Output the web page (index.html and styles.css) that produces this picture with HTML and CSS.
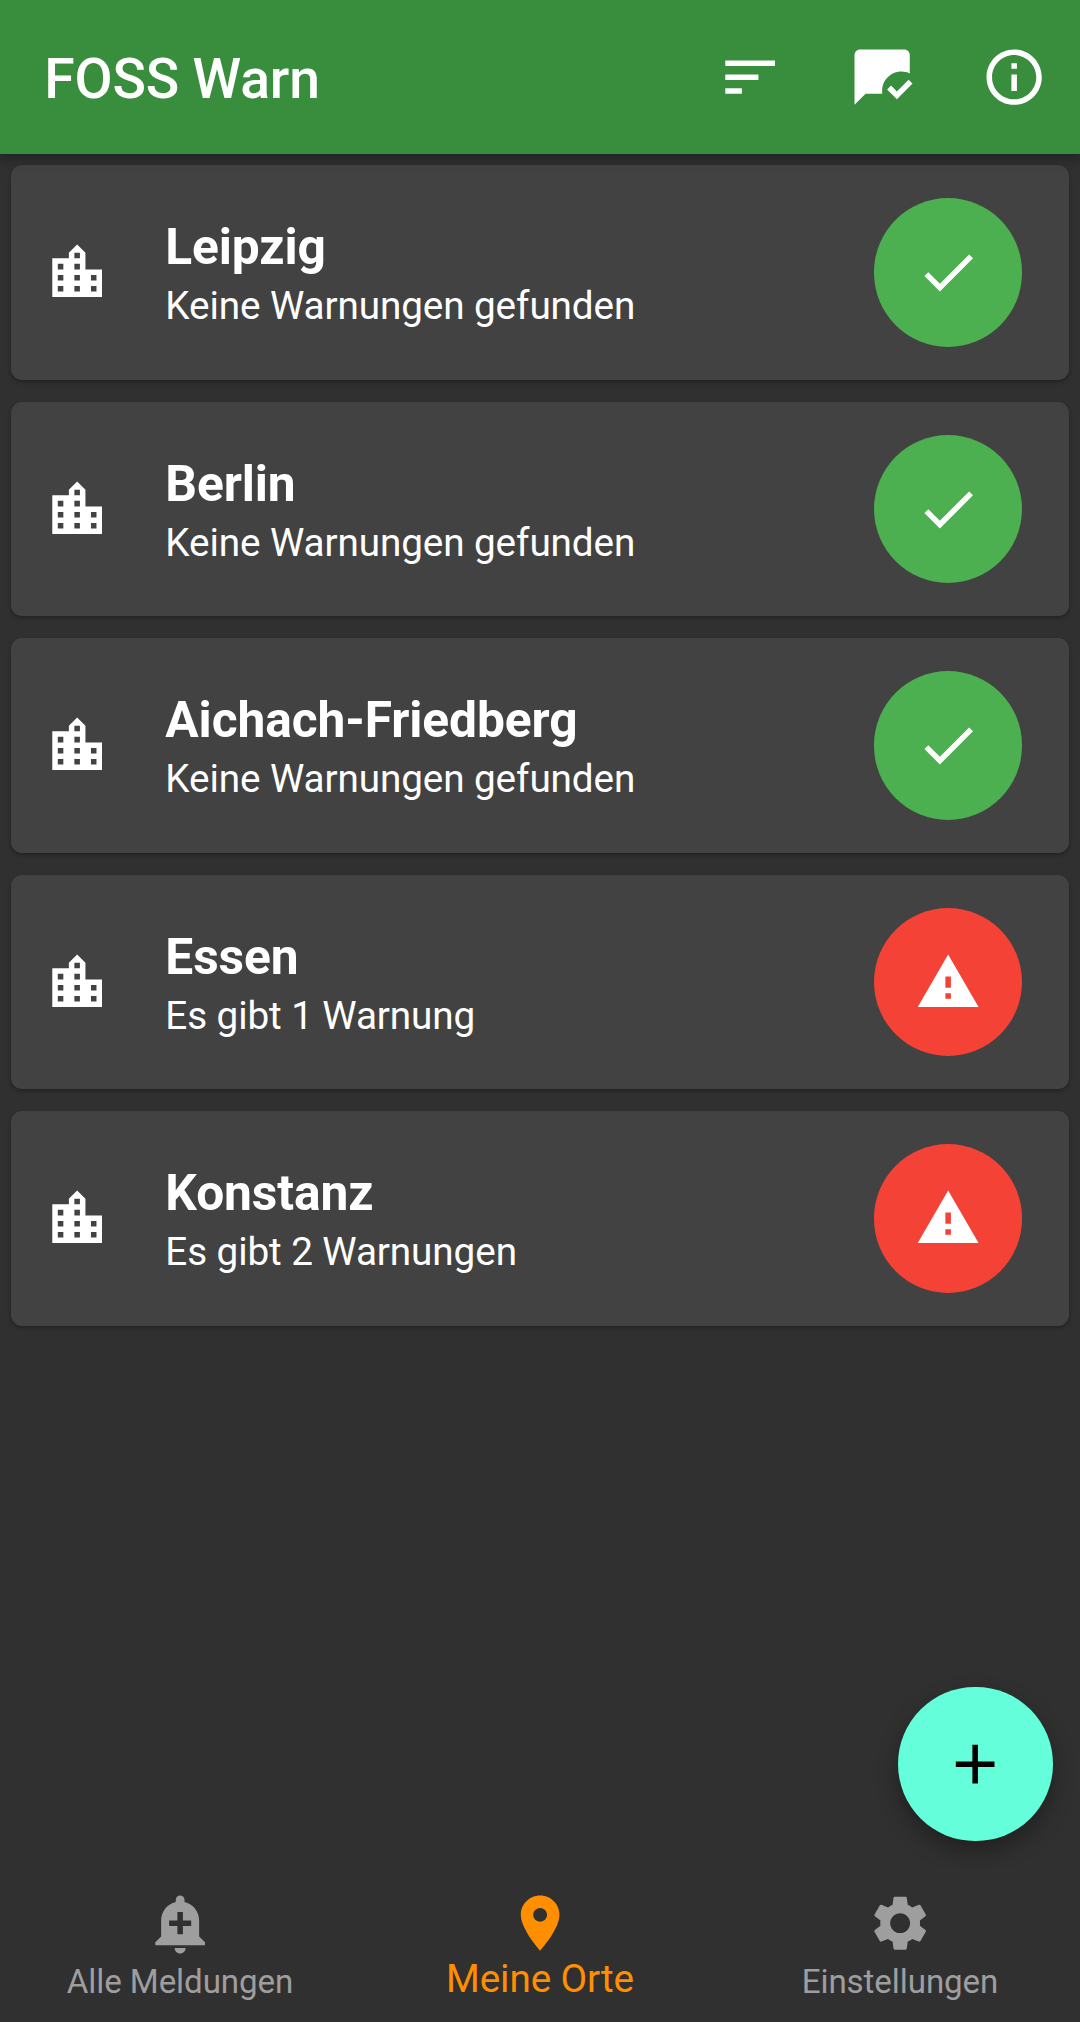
FILE: index.html
```html
<!DOCTYPE html>
<html lang="de">
<head>
<meta charset="utf-8">
<title>FOSS Warn</title>
<link rel="stylesheet" href="styles.css">
</head>
<body>
<svg class="sprite" aria-hidden="true">
  <symbol id="city" viewBox="0 0 24 24"><path d="M15 11V5l-3-3-3 3v2H3v14h18V11h-6zm-8 8H5v-2h2v2zm0-4H5v-2h2v2zm0-4H5V9h2v2zm6 8h-2v-2h2v2zm0-4h-2v-2h2v2zm0-4h-2V9h2v2zm0-4h-2V5h2v2zm6 12h-2v-2h2v2zm0-4h-2v-2h2v2z"/></symbol>
  <symbol id="check" viewBox="0 0 24 24"><path d="M9 16.17L4.83 12l-1.42 1.41L9 19 21 7l-1.41-1.41z"/></symbol>
  <symbol id="warning" viewBox="0 0 24 24"><path d="M1 21h22L12 2 1 21zm12-3h-2v-2h2v2zm0-4h-2v-4h2v4z"/></symbol>
</svg>
<div class="app">
  <header class="app-bar">
    <h1 class="title">FOSS Warn</h1>
    <div class="actions">
      <svg class="icon" viewBox="0 0 24 24"><path d="M3 18h6v-2H3v2zM3 6v2h18V6H3zm0 7h12v-2H3v2z"/></svg>
      <svg class="icon" viewBox="0 0 24 24"><path d="M17.34 20l-3.54-3.54 1.41-1.41 2.12 2.12 4.24-4.24L23 14.34 17.34 20zM12 17c0-3.87 3.13-7 7-7 1.08 0 2.09.25 3 .68V4c0-1.1-.9-2-2-2H4c-1.1 0-2 .9-2 2v18l4-4h6v-1z"/></svg>
      <svg class="icon" viewBox="0 0 24 24"><path d="M11 7h2v2h-2zm0 4h2v6h-2zm1-9C6.48 2 2 6.48 2 12s4.48 10 10 10 10-4.48 10-10S17.52 2 12 2zm0 18c-4.41 0-8-3.59-8-8s3.59-8 8-8 8 3.59 8 8-3.59 8-8 8z"/></svg>
    </div>
  </header>

  <main class="places">
    <article class="card">
      <svg class="icon"><use href="#city"/></svg>
      <div class="info"><h2 class="name">Leipzig</h2><p class="status">Keine Warnungen gefunden</p></div>
      <span class="badge ok"><svg class="icon"><use href="#check"/></svg></span>
    </article>
    <article class="card">
      <svg class="icon"><use href="#city"/></svg>
      <div class="info"><h2 class="name">Berlin</h2><p class="status">Keine Warnungen gefunden</p></div>
      <span class="badge ok"><svg class="icon"><use href="#check"/></svg></span>
    </article>
    <article class="card">
      <svg class="icon"><use href="#city"/></svg>
      <div class="info"><h2 class="name">Aichach-Friedberg</h2><p class="status">Keine Warnungen gefunden</p></div>
      <span class="badge ok"><svg class="icon"><use href="#check"/></svg></span>
    </article>
    <article class="card">
      <svg class="icon"><use href="#city"/></svg>
      <div class="info"><h2 class="name">Essen</h2><p class="status">Es gibt 1 Warnung</p></div>
      <span class="badge alert"><svg class="icon"><use href="#warning"/></svg></span>
    </article>
    <article class="card">
      <svg class="icon"><use href="#city"/></svg>
      <div class="info"><h2 class="name">Konstanz</h2><p class="status">Es gibt 2 Warnungen</p></div>
      <span class="badge alert"><svg class="icon"><use href="#warning"/></svg></span>
    </article>
    <button class="fab" aria-label="Ort hinzufügen"><svg class="icon" viewBox="0 0 24 24"><path d="M19 13h-6v6h-2v-6H5v-2h6V5h2v6h6v2z"/></svg></button>
  </main>

  <nav class="bottom-nav">
    <a class="tab">
      <svg class="icon" viewBox="0 0 24 24"><path d="M10.01 21.01c0 1.1.89 1.99 1.99 1.99s1.99-.89 1.99-1.99h-3.98zm8.87-4.19V11c0-3.25-2.25-5.97-5.29-6.69v-.72C13.59 2.71 12.88 2 12 2s-1.59.71-1.59 1.59v.72C7.37 5.03 5.12 7.75 5.12 11v5.82L3 18.94V20h18v-1.06l-2.12-2.12zM16 13.01h-3v3h-2v-3H8V11h3V8h2v3h3v2.01z"/></svg>
      <span class="label">Alle Meldungen</span>
    </a>
    <a class="tab active">
      <svg class="icon" viewBox="0 0 24 24"><path d="M12 2C8.13 2 5 5.13 5 9c0 5.25 7 13 7 13s7-7.75 7-13c0-3.87-3.13-7-7-7zm0 9.5c-1.38 0-2.5-1.12-2.5-2.5s1.12-2.5 2.5-2.5 2.5 1.12 2.5 2.5-1.12 2.5-2.5 2.5z"/></svg>
      <span class="label">Meine Orte</span>
    </a>
    <a class="tab">
      <svg class="icon" viewBox="0 0 24 24"><path d="M19.14 12.94c.04-.3.06-.61.06-.94 0-.32-.02-.64-.07-.94l2.03-1.58c.18-.14.23-.41.12-.61l-1.92-3.32c-.12-.22-.37-.29-.59-.22l-2.39.96c-.5-.38-1.03-.7-1.62-.94l-.36-2.54c-.04-.24-.24-.41-.48-.41h-3.84c-.24 0-.43.17-.47.41l-.36 2.54c-.59.24-1.13.57-1.62.94l-2.39-.96c-.22-.08-.47 0-.59.22L2.74 8.87c-.12.21-.08.47.12.61l2.03 1.58c-.05.3-.09.63-.09.94s.02.64.07.94l-2.03 1.58c-.18.14-.23.41-.12.61l1.92 3.32c.12.22.37.29.59.22l2.39-.96c.5.38 1.03.7 1.62.94l.36 2.54c.05.24.24.41.48.41h3.84c.24 0 .44-.17.47-.41l.36-2.54c.59-.24 1.13-.56 1.62-.94l2.39.96c.22.08.47 0 .59-.22l1.92-3.32c.12-.22.07-.47-.12-.61l-2.01-1.58zM12 15.6c-1.98 0-3.6-1.62-3.6-3.6s1.62-3.6 3.6-3.6 3.6 1.62 3.6 3.6-1.62 3.6-3.6 3.6z"/></svg>
      <span class="label">Einstellungen</span>
    </a>
  </nav>
</div>
</body>
</html>
```
FILE: styles.css
```css
* {
  box-sizing: border-box;
}

body {
  margin: 0;
  background: #303030;
  color: #fff;
  font-family: Roboto, sans-serif;
  letter-spacing: -0.1px;
}

h1,
h2,
p {
  margin: 0;
}

.sprite {
  display: none;
}

.app {
  display: flex;
  flex-direction: column;
  height: 2022px;
  overflow: hidden;
}

.icon {
  display: block;
  flex: none;
  width: 66.3px;
  height: 66.3px;
  fill: currentColor;
}

.app-bar {
  z-index: 1;
  display: flex;
  flex: none;
  align-items: center;
  justify-content: space-between;
  height: 154px;
  padding: 0 33px 0 44.2px;
  background: #388e3c;
  box-shadow: 0 5px 11px rgba(0, 0, 0, 0.3);
}

.title {
  padding-top: 3px;
  font-size: 55.25px;
  font-weight: 500;
  line-height: 64px;
  letter-spacing: -0.15px;
}

.actions {
  display: flex;
  gap: 65.7px;
}

.places {
  position: relative;
  display: flex;
  flex: 1;
  flex-direction: column;
  gap: 22.1px;
  min-height: 0;
  padding: 11.2px 11px;
  overflow: hidden;
}

.card {
  display: flex;
  flex: none;
  align-items: center;
  height: 214.4px;
  padding: 0 46.7px 0 33px;
  border-radius: 11px;
  background: #424242;
  box-shadow: 0 2px 4px rgba(0, 0, 0, 0.3);
}

.info {
  flex: 1;
  padding: 3px 0 0 55px;
}

.name {
  font-size: 49.7px;
  font-weight: 700;
  line-height: 58px;
}

.status {
  padding-top: 7px;
  font-size: 38.7px;
  line-height: 46px;
}

.badge {
  display: grid;
  place-items: center;
  width: 148.6px;
  height: 148.6px;
  border-radius: 50%;
}

.ok {
  background: #4caf50;
}

.alert {
  background: #f44336;
}

.fab {
  position: absolute;
  right: 27.3px;
  bottom: 26.4px;
  display: grid;
  place-items: center;
  width: 154.4px;
  height: 154.4px;
  padding: 0;
  border: 0;
  border-radius: 50%;
  background: #64ffda;
  color: #000;
  box-shadow: 0 10px 22px rgba(0, 0, 0, 0.32);
}

.bottom-nav {
  display: grid;
  flex: none;
  grid-template-columns: repeat(3, 1fr);
  height: 154.7px;
  background: #303030;
}

.tab {
  display: flex;
  flex-direction: column;
  align-items: center;
  padding-top: 22.4px;
  color: #9e9e9e;
}

.label {
  padding-top: 6px;
  font-size: 33.15px;
  line-height: 39px;
  white-space: nowrap;
}

.active {
  color: #ff8f00;
}

.active .label {
  padding-top: 0;
  font-size: 38.7px;
  line-height: 46px;
}
```
